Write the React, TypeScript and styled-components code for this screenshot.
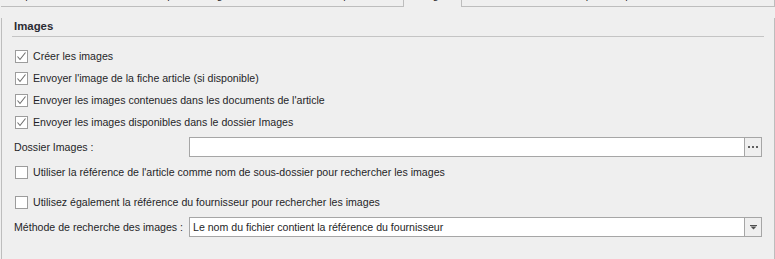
import React from 'react';
import styled, { createGlobalStyle } from 'styled-components';

const GlobalStyle = createGlobalStyle`
  html, body {
    margin: 0;
    padding: 0;
    background: #efefef;
  }
  body {
    font-family: 'Liberation Sans', Arial, sans-serif;
    font-size: 10.6px;
    color: #1f1f28;
  }
`;

const Root = styled.div`
  width: 775px;
  height: 259px;
  overflow: hidden;
  padding-left: 1px;
  box-sizing: border-box;
  background: #efefef;
`;

const TabStrip = styled.div`
  display: flex;
  height: 7px;
`;

const Tab = styled.div<{ $w?: number; $pad?: number; $active?: boolean }>`
  box-sizing: border-box;
  flex: ${(p) => (p.$w ? `0 0 ${p.$w}px` : '1 1 auto')};
  height: 7px;
  overflow: hidden;
  white-space: nowrap;
  padding-left: ${(p) => p.$pad ?? 0}px;
  border-bottom: ${(p) => (p.$active ? 'none' : '1px solid #bdbdbd')};
  border-left: ${(p) => (p.$active ? '1px solid #bdbdbd' : 'none')};
  border-right: ${(p) => (p.$active ? '1px solid #bdbdbd' : 'none')};
  text-align: ${(p) => (p.$active ? 'center' : 'left')};
  &:last-child {
    border-right: 1px solid #bdbdbd;
  }
`;

const TabLabel = styled.span`
  display: inline-block;
  line-height: 14px;
  margin-top: -12px;
  vertical-align: top;
`;

const Panel = styled.div`
  border-left: 1px solid #bdbdbd;
  border-right: 1px solid #bdbdbd;
  height: 252px;
  box-sizing: border-box;
  padding: 0 10px;
`;

const GroupHeader = styled.div`
  margin-top: 11px;
  line-height: 16px;
  padding: 0 0 2px 2px;
  border-bottom: 1px solid #c4c4c4;
  font-weight: bold;
  font-size: 11.4px;
  color: #2b2b33;
`;

const CheckList = styled.div`
  margin-top: 8px;
  display: flex;
  flex-direction: column;
`;

const CheckRow = styled.label<{ $gap?: number }>`
  display: flex;
  align-items: center;
  height: 22px;
  margin-top: ${(p) => p.$gap ?? 0}px;
  padding-left: 3px;
  gap: 5px;
  white-space: nowrap;
`;

const Box = styled.span`
  flex: 0 0 13px;
  width: 13px;
  height: 13px;
  box-sizing: border-box;
  border: 1px solid #9c9c9c;
  background: #fff;
  display: flex;
  align-items: center;
  justify-content: center;
`;

const FieldRow = styled.div<{ $gap?: number }>`
  display: flex;
  align-items: center;
  height: 22px;
  margin-top: ${(p) => p.$gap ?? 0}px;
  margin-right: 2px;
`;

const FieldLabel = styled.span`
  flex: 0 0 177px;
  padding-left: 2px;
  box-sizing: border-box;
  white-space: nowrap;
`;

const Edit = styled.div`
  flex: 1;
  display: flex;
  height: 20px;
  box-sizing: border-box;
  border: 1px solid #a6a6a6;
  background: #fff;
`;

const EditText = styled.span`
  flex: 1;
  line-height: 18px;
  padding-left: 3px;
  white-space: nowrap;
  overflow: hidden;
`;

const EditButton = styled.span`
  flex: 0 0 16px;
  border-left: 1px solid #a6a6a6;
  background: #efefef;
  display: flex;
  align-items: center;
  justify-content: center;
`;

const Check = () => (
  <svg width="11" height="11" viewBox="0 0 11 11">
    <path d="M1.5 5.5 L4 8.5 L9.5 1.5" fill="none" stroke="#6e6e6e" strokeWidth="1.1" />
  </svg>
);

const Dots = () => (
  <svg width="10" height="2" viewBox="0 0 10 2">
    <rect x="0" y="0" width="2" height="2" fill="#606060" />
    <rect x="4" y="0" width="2" height="2" fill="#606060" />
    <rect x="8" y="0" width="2" height="2" fill="#606060" />
  </svg>
);

const Arrow = () => (
  <svg width="7" height="5" viewBox="0 0 7 5">
    <rect x="0" y="0" width="7" height="1" fill="#505050" />
    <path d="M0.5 1.5 H6.5 L3.5 4.5 Z" fill="#505050" />
  </svg>
);

const CheckItem = ({ checked, text, gap }: { checked?: boolean; text: string; gap?: number }) => (
  <CheckRow $gap={gap}>
    <Box>{checked && <Check />}</Box>
    <span>{text}</span>
  </CheckRow>
);

export default function App() {
  return (
    <Root>
      <GlobalStyle />
      <TabStrip>
        <Tab $w={138} $pad={16}>
          <TabLabel>Options</TabLabel>
        </Tab>
        <Tab $w={164} $pad={16}>
          <TabLabel>Export catalogue</TabLabel>
        </Tab>
        <Tab $w={100} $pad={18}>
          <TabLabel>Comptabilité</TabLabel>
        </Tab>
        <Tab $w={59} $active>
          <TabLabel>Images</TabLabel>
        </Tab>
        <Tab $pad={112}>
          <TabLabel>Import / Export</TabLabel>
        </Tab>
      </TabStrip>
      <Panel>
        <GroupHeader>Images</GroupHeader>
        <CheckList>
          <CheckItem checked text="Créer les images" />
          <CheckItem checked text="Envoyer l'image de la fiche article (si disponible)" />
          <CheckItem checked text="Envoyer les images contenues dans les documents de l'article" />
          <CheckItem checked text="Envoyer les images disponibles dans le dossier Images" />
          <FieldRow $gap={3}>
            <FieldLabel>Dossier Images :</FieldLabel>
            <Edit>
              <EditText />
              <EditButton>
                <Dots />
              </EditButton>
            </Edit>
          </FieldRow>
          <CheckItem
            gap={3}
            text="Utiliser la référence de l'article comme nom de sous-dossier pour rechercher les images"
          />
          <CheckItem
            gap={8}
            text="Utilisez également la référence du fournisseur pour rechercher les images"
          />
          <FieldRow $gap={3}>
            <FieldLabel>Méthode de recherche des images :</FieldLabel>
            <Edit>
              <EditText>Le nom du fichier contient la référence du fournisseur</EditText>
              <EditButton>
                <Arrow />
              </EditButton>
            </Edit>
          </FieldRow>
        </CheckList>
      </Panel>
    </Root>
  );
}
